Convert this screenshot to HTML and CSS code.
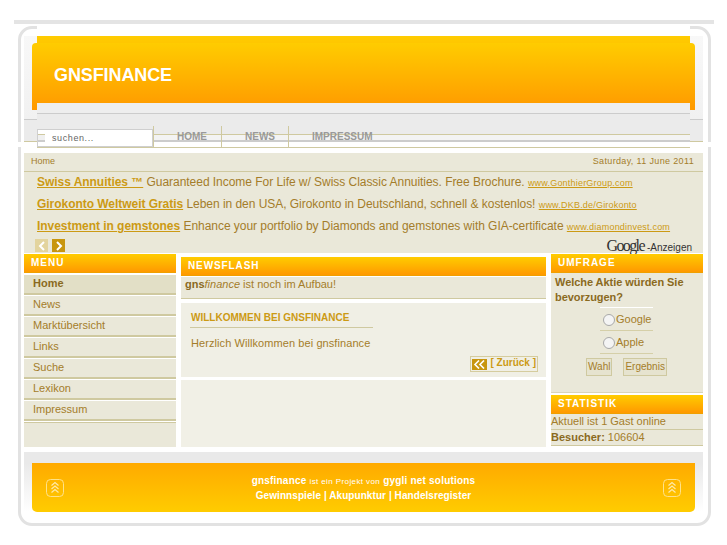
FILE: index.html
```html
<!DOCTYPE html>
<html lang="en">
<head>
    <meta charset="UTF-8">
    <meta name="viewport" content="width=device-width, initial-scale=1.0">
    <title>GNSFINANCE</title>
    <link rel="stylesheet" href="styles.css">
</head>
<body>
    <div class="topline"></div>
    <div class="shell">
        <div class="masthead">
            <div class="banner"><span class="logo">GNSFINANCE</span></div>
            <div class="strip"></div>
            <div class="navbar">
                <div class="search">
                    <span class="search-grip"></span>
                    <input class="search-input" type="text" value="suchen...">
                </div>
                <ul class="nav">
                    <li><a href="#">HOME</a></li>
                    <li><a href="#">NEWS</a></li>
                    <li><a href="#">IMPRESSUM</a></li>
                </ul>
            </div>
        </div>

        <div class="infobar">
            <span>Home</span>
            <span class="date">Saturday, 11 June 2011</span>
        </div>

        <div class="ads">
            <p class="ad"><a class="ad-title" href="#">Swiss Annuities ™</a> Guaranteed Income For Life w/ Swiss Classic Annuities. Free Brochure. <a class="ad-url" href="#">www.GonthierGroup.com</a></p>
            <p class="ad"><a class="ad-title" href="#">Girokonto Weltweit Gratis</a> Leben in den USA, Girokonto in Deutschland, schnell &amp; kostenlos! <a class="ad-url" href="#">www.DKB.de/Girokonto</a></p>
            <p class="ad"><a class="ad-title" href="#">Investment in gemstones</a> Enhance your portfolio by Diamonds and gemstones with GIA-certificate <a class="ad-url" href="#">www.diamondinvest.com</a></p>
            <div class="ads-foot">
                <div class="pager">
                    <span class="pager-btn pager-off">
                        <svg width="8" height="10" viewBox="0 0 8 10"><path d="M6 1 2 5l4 4" fill="none" stroke="#fff" stroke-width="2"/></svg>
                    </span>
                    <span class="pager-btn">
                        <svg width="8" height="10" viewBox="0 0 8 10"><path d="M2 1l4 4-4 4" fill="none" stroke="#fff" stroke-width="2"/></svg>
                    </span>
                </div>
                <div class="adsense"><span class="google">Google</span><span class="anzeigen">-Anzeigen</span></div>
            </div>
        </div>

        <div class="columns">
            <div class="col-left">
                <h3 class="box-title">MENU</h3>
                <ul class="menu">
                    <li class="active"><a href="#">Home</a></li>
                    <li><a href="#">News</a></li>
                    <li><a href="#">Marktübersicht</a></li>
                    <li><a href="#">Links</a></li>
                    <li><a href="#">Suche</a></li>
                    <li><a href="#">Lexikon</a></li>
                    <li><a href="#">Impressum</a></li>
                </ul>
                <div class="menu-rest"></div>
            </div>

            <div class="col-main">
                <h3 class="box-title">NEWSFLASH</h3>
                <div class="flash"><b>gns</b><i>finance</i> ist noch im Aufbau!</div>
                <div class="article">
                    <h2 class="article-title">WILLKOMMEN BEI GNSFINANCE</h2>
                    <p class="article-text">Herzlich Willkommen bei gnsfinance</p>
                    <div class="back-row">
                        <a class="back" href="#">
                            <span class="back-icon">
                                <svg width="13" height="9" viewBox="0 0 13 9"><path d="M6 .5 2 4.500l4 4M11 .5l-4 4 4 4" fill="none" stroke="#fff" stroke-width="1.600"/></svg>
                            </span>
                            <span class="back-text">[ Zurück ]</span>
                        </a>
                    </div>
                </div>
                <div class="main-rest"></div>
            </div>

            <div class="col-right">
                <h3 class="box-title">UMFRAGE</h3>
                <div class="poll">
                    <div class="poll-question">Welche Aktie würden Sie bevorzugen?</div>
                    <div class="poll-options">
                        <label class="poll-option"><span class="radio"></span>Google</label>
                        <label class="poll-option"><span class="radio"></span>Apple</label>
                    </div>
                    <div class="poll-buttons">
                        <span class="poll-btn">Wahl</span>
                        <span class="poll-btn">Ergebnis</span>
                    </div>
                </div>
                <h3 class="box-title box-title-stat">STATISTIK</h3>
                <div class="stat">Aktuell ist 1 Gast online</div>
                <div class="stat"><b>Besucher:</b> 106604</div>
            </div>
        </div>

        <div class="footer-band">
            <div class="footer">
                <svg class="up-icon" width="18" height="18" viewBox="0 0 18 18">
                    <rect x=".5" y=".5" width="17" height="17" rx="4" fill="none" stroke="#ffe28a"/>
                    <path d="M5.500 6.500 9 3.500l3.500 3M5.500 10 9 7l3.500 3M5.500 13.500 9 10.500l3.500 3" fill="none" stroke="#ffe9a8" stroke-width="1.200"/>
                </svg>
                <div class="footer-text">
                    <div><b>gnsfinance</b> <small>ist ein Projekt von</small> <b>gygli net solutions</b></div>
                    <div class="footer-links"><b>Gewinnspiele | Akupunktur | Handelsregister</b></div>
                </div>
                <svg class="up-icon" width="18" height="18" viewBox="0 0 18 18">
                    <rect x=".5" y=".5" width="17" height="17" rx="4" fill="none" stroke="#ffe28a"/>
                    <path d="M5.500 6.500 9 3.500l3.500 3M5.500 10 9 7l3.500 3M5.500 13.500 9 10.500l3.500 3" fill="none" stroke="#ffe9a8" stroke-width="1.200"/>
                </svg>
            </div>
        </div>
    </div>
</body>
</html>
```

FILE: styles.css
```css
body {
    margin: 0;
    background-color: #fff;
    font-family: "Liberation Sans", Arial, sans-serif;
    font-size: 11px;
    color: #a47d2a;
}

a {
    color: inherit;
    text-decoration: none;
}

ul {
    list-style: none;
    margin: 0;
    padding: 0;
}

.topline {
    height: 4px;
    margin: 20px 13px 0 14px;
    background-color: #e4e4e4;
}

.shell {
    position: relative;
    height: 487px;
    margin: 2px 16px 0 18px;
    padding: 7px 5px 0 3px;
    border: 3px solid #e2e2e2;
    border-radius: 14px;
    background-color: #fff;
}

/* hides the top edge between the rounded corners */
.shell::before {
    content: "";
    position: absolute;
    top: -3px;
    left: 16px;
    right: 18px;
    height: 5px;
    background-color: #fff;
}

/* white cut through the frame under the navbar */
.shell::after {
    content: "";
    position: absolute;
    top: 113px;
    left: -7px;
    right: -7px;
    height: 5px;
    background-color: #fff;
}

.masthead {
    position: relative;
    z-index: 1;
    height: 112px;
    margin-bottom: 5px;
    background: linear-gradient(#f8f8f8 0, #f1f1f1 83px, #cccccc 83px, #cccccc 84px, #ebebeb 84px, #ebebeb 105px, #cfc9a0 105px, #cfc9a0 106px, transparent 106px);
}

.banner {
    position: relative;
    z-index: 0;
    height: 67px;
    margin: 0 13px;
    background: linear-gradient(#ffcc00, #ff9900);
}

.banner::before {
    content: "";
    position: absolute;
    z-index: -1;
    top: 7px;
    left: -5px;
    right: -5px;
    height: 67px;
    border-radius: 4px 4px 0 0;
    background: linear-gradient(#ffcc00, #ff9900);
}

.logo {
    position: absolute;
    top: 29px;
    left: 17px;
    font-size: 18px;
    font-weight: bold;
    letter-spacing: -0.1px;
    color: #fff;
}

.strip {
    position: relative;
    height: 23px;
    margin: 0 13px;
    background: linear-gradient(#eeeeee 0, #eeeeee 10px, #cccccc 10px, #cccccc 11px, #ebebeb 11px);
}

.navbar {
    position: relative;
    display: flex;
    height: 22px;
    margin: 0 13px;
    background: linear-gradient(#ebebeb 0, #ebebeb 8px, #cfc9a0 8px, #cfc9a0 9px, #f3f3f3 9px, #f3f3f3 14px, #cccccc 14px, #cccccc 16px, #fff 16px, #fff 21px, #cfc9a0 21px);
}

.search {
    display: flex;
    width: 114px;
    height: 16px;
    margin-top: 3px;
    border: 1px solid #cfcfcf;
    background-color: #fff;
}

.search-grip {
    width: 7px;
    height: 8px;
    margin-top: 4px;
    background: linear-gradient(#cfc9a0 0, #cfc9a0 1px, #f0f0f0 1px, #f0f0f0 6px, #cccccc 6px);
}

.search-input {
    width: 90px;
    padding: 0 0 0 7px;
    border: none;
    outline: none;
    background: transparent;
    font-family: "Liberation Sans", Arial, sans-serif;
    font-size: 9px;
    letter-spacing: 0.6px;
    color: #666;
}

.nav {
    display: flex;
}

.nav li {
    height: 21px;
    padding: 0 14px 0 23px;
    border-left: 1px solid #cfc9a0;
    line-height: 21px;
    font-size: 10px;
    font-weight: bold;
    color: #999;
}

.nav li + li {
    padding-right: 13px;
}

.infobar {
    display: flex;
    justify-content: space-between;
    height: 18px;
    padding: 0 9px 0 7px;
    border-bottom: 1px solid #cfc9a0;
    background-color: #eae8d9;
    line-height: 17px;
    font-size: 9px;
}

.date {
    letter-spacing: 0.35px;
}

.ads {
    height: 81px;
    padding: 0 11px;
    background-color: #eae8d9;
}

.ad {
    margin: 0 0 0 2px;
    height: 22px;
    line-height: 20px;
    font-size: 12px;
    letter-spacing: -0.04px;
    white-space: nowrap;
}

.ad-title {
    font-weight: bold;
    color: #cc9a14;
    text-decoration: underline;
}

.ad-url {
    font-size: 9px;
    letter-spacing: 0.2px;
    color: #cc9a14;
    text-decoration: underline;
}

.ads-foot {
    display: flex;
    justify-content: space-between;
    align-items: center;
    height: 15px;
}

.pager {
    display: flex;
    gap: 4px;
}

.pager-btn {
    display: flex;
    align-items: center;
    justify-content: center;
    width: 13px;
    height: 13px;
    background-color: #c8960f;
}

.pager-off {
    background-color: #e3d49e;
}

.adsense {
    display: flex;
    align-items: baseline;
    color: #333;
}

.google {
    font-family: "Liberation Serif", serif;
    font-size: 16px;
    letter-spacing: -1.6px;
}

.anzeigen {
    font-size: 10px;
    margin-left: 3px;
}

.columns {
    display: grid;
    grid-template-columns: 152px 365px 152px;
    column-gap: 5px;
    height: 194px;
    padding-top: 1px;
    box-sizing: border-box;
}

.box-title {
    height: 18px;
    margin: 0;
    padding-left: 7px;
    border-bottom: 1px solid #f0a000;
    background: linear-gradient(#ffcc00, #ff9900);
    line-height: 17px;
    font-size: 10px;
    font-weight: bold;
    letter-spacing: 1px;
    color: #fff;
}

.col-left {
    display: flex;
    flex-direction: column;
}

.menu {
    margin-top: 2px;
}

.menu li {
    height: 18px;
    margin-bottom: 1px;
    padding: 0 9px;
    border-bottom: 2px solid #cfc9a0;
    background-color: #eae8d9;
    line-height: 17px;
}

.menu .active {
    background-color: #e2dfc6;
    font-weight: bold;
    color: #8a6a1e;
}

.menu-rest {
    flex: 1;
    border-top: 1px solid #cfc9a0;
    background-color: #eae8d9;
}

.col-main {
    display: flex;
    flex-direction: column;
    padding-top: 3px;
}

.col-main .box-title {
    letter-spacing: 0.9px;
}

.flash {
    height: 21px;
    margin-top: 1px;
    padding-left: 4px;
    border-bottom: 1px solid #cfc9a0;
    background-color: #eae8d9;
    line-height: 14px;
    font-size: 11px;
}

.flash b {
    color: #8a6a1e;
}

.article {
    height: 74px;
    margin-top: 4px;
    padding: 0 8px 0 9px;
    background-color: #f0efe5;
    box-sizing: border-box;
}

.article-title {
    width: 182px;
    margin: 0;
    padding: 9px 0 3px 1px;
    border-bottom: 1px solid #cfc9a0;
    line-height: 12px;
    font-size: 10px;
    font-weight: bold;
    color: #cc9a14;
}

.article-text {
    margin: 9px 0 0 1px;
    font-size: 11px;
    letter-spacing: 0.08px;
}

.back-row {
    display: flex;
    justify-content: flex-end;
    margin-top: 7px;
}

.back {
    display: flex;
    align-items: center;
    height: 14px;
    padding: 0 1px;
    border: 1px solid #d5cc9e;
    font-size: 10px;
    font-weight: bold;
    color: #cc9a14;
}

.back-text {
    margin-top: -3px;
}

.back-icon {
    display: flex;
    align-items: center;
    justify-content: center;
    width: 15px;
    height: 11px;
    margin-right: 3px;
    background-color: #c8960f;
}

.main-rest {
    flex: 1;
    margin-top: 3px;
    background-color: #f1f0e6;
}

.col-right {
    display: flex;
    flex-direction: column;
}

.poll {
    height: 120px;
    padding: 2px 3px 0 4px;
    border-bottom: 1px solid #d8d4bb;
    background-color: #eae8d9;
    box-sizing: border-box;
}

.poll-question {
    line-height: 15px;
    font-weight: bold;
    color: #8a6a1e;
    letter-spacing: -0.05px;
}

.poll-options {
    width: 53px;
    margin: 2px 0 0 45px;
    border-top: 1px solid #fff;
}

.poll-option {
    display: flex;
    align-items: center;
    height: 22px;
    border-bottom: 1px solid #d5cfa8;
}

.radio {
    width: 10px;
    height: 10px;
    margin: 2px 1px 0 3px;
    border: 1px solid #a8a8a8;
    border-radius: 50%;
    background-color: #f4f4f4;
    flex-shrink: 0;
}

.poll-buttons {
    display: flex;
    margin: 4px 0 0 31px;
    gap: 11px;
}

.poll-btn {
    height: 16px;
    padding: 0 1px;
    border: 1px solid #cfc9a0;
    background-color: #e6e3cf;
    line-height: 16px;
    font-size: 10px;
}

.box-title-stat {
    margin-top: 2px;
}

.stat {
    height: 15px;
    border-bottom: 1px solid #cfc9a0;
    background-color: #eae8d9;
    line-height: 15px;
}

.stat b {
    color: #8a6a1e;
}

.footer-band {
    height: 60px;
    margin-top: 5px;
    padding-top: 11px;
    box-sizing: border-box;
    background: linear-gradient(#e9e9e9, #e9e9e9 11px, #ffffff);
}

.footer {
    display: flex;
    align-items: center;
    justify-content: space-between;
    height: 49px;
    margin: 0 8px;
    padding: 0 14px;
    border-radius: 0 0 5px 5px;
    background: linear-gradient(#ffaa00, #ffcc00);
}

.footer-text {
    padding-top: 1px;
    text-align: center;
    line-height: 14px;
    font-size: 10px;
    letter-spacing: 0.2px;
    color: #fff;
}

.footer-text small {
    font-size: 8px;
    letter-spacing: 0.4px;
}

.footer-links {
    letter-spacing: 0.07px;
}
```
